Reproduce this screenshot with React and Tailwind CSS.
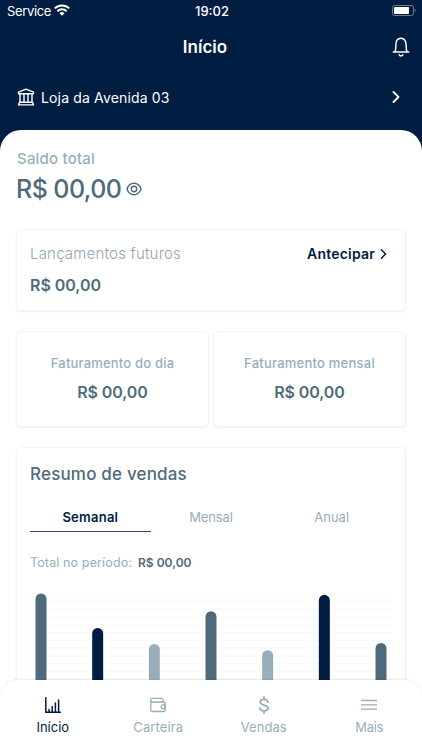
const BARS = [
  { top: 593.5, color: "#4f6b7b" },
  { top: 628, color: "#011d41" },
  { top: 644, color: "#98aebb" },
  { top: 611.2, color: "#4f6b7b" },
  { top: 650.2, color: "#98aebb" },
  { top: 594.8, color: "#011d41" },
  { top: 643, color: "#4f6b7b" },
];

const CARD = "rounded-[5px] border border-[#f3f4f4] bg-white shadow-[0_1px_2px_rgba(0,0,0,0.07)]";

function StatusBar() {
  return (
    <div className="grid h-[22px] grid-cols-3 items-center text-white">
      <div className="flex items-center gap-[3px] pl-[7px]">
        <span className="text-[13px] leading-none tracking-[-0.35px]">Service</span>
        <svg className="-mt-[2px] h-3 w-4" viewBox="0 0 16 12" fill="none" stroke="currentColor" strokeWidth="2">
          <path d="M.8 4.4a10.4 10.4 0 0 1 14.4 0M3.4 7.2a6.6 6.6 0 0 1 9.2 0" />
          <path d="M8 11.8 5.5 9.3a3.6 3.6 0 0 1 5 0Z" fill="currentColor" stroke="none" />
        </svg>
      </div>
      <span className="pl-[2px] text-center text-[13px] font-medium leading-none">19:02</span>
      <svg className="-mt-px mr-[6px] h-[11px] w-6 justify-self-end" viewBox="0 0 24 11" fill="none">
        <rect x=".5" y=".5" width="21" height="10" rx="2" stroke="#6c7b90" />
        <rect x="2" y="2" width="15" height="7" rx=".8" fill="#fff" />
        <path d="M22.7 3.6c1.2.4 1.2 3.4 0 3.8Z" fill="#6c7b90" />
      </svg>
    </div>
  );
}

function Chevron({ className }) {
  return (
    <svg className={className} viewBox="0 0 8 12" fill="none" stroke="currentColor" strokeWidth="1.8" strokeLinecap="round" strokeLinejoin="round">
      <path d="m1.5 1 5 5-5 5" />
    </svg>
  );
}

function Header() {
  return (
    <header className="h-[130px] shrink-0 text-white">
      <StatusBar />
      <div className="grid h-[50px] grid-cols-[1fr_auto_1fr] items-center px-3">
        <span />
        <h1 className="pr-3 pt-px text-[17px] font-semibold">Início</h1>
        <svg className="h-5 w-[18px] justify-self-end" viewBox="0 0 18 20" fill="none" stroke="currentColor" strokeWidth="1.5" strokeLinecap="round" strokeLinejoin="round">
          <path d="M1.2 15h15.6M3 14.8c.7-1.2.8-2.7.8-5.8C3.800 3.800 5.200 1.200 9 1.200s5.200 2.600 5.200 7.800c0 3.100.1 4.600.8 5.800M7.200 17.800c.5 1.500 3.100 1.500 3.600 0" />
        </svg>
      </div>
      <div className="flex h-[50px] items-center pl-[17px] pr-[22px]">
        <svg className="h-[18px] w-[18px]" viewBox="0 0 18 18" fill="none" stroke="currentColor" strokeWidth="1.4" strokeLinejoin="round">
          <path d="M1.500 4.200 9 1.100l7.500 3.100v1.600h-15ZM3 5.800v8.400M7 5.800v8.400M11 5.800v8.400M15 5.800v8.400M2.500 14.200h13l1 2.700h-15Z" />
        </svg>
        <span className="ml-[6px] text-[14px] tracking-[0.15px]">Loja da Avenida 03</span>
        <Chevron className="ml-auto h-3 w-2" />
      </div>
    </header>
  );
}

function RevenueCard({ title, tracking }) {
  return (
    <section className={`${CARD} flex h-24 flex-col items-center pt-[22px]`}>
      <p className={`text-[13px] font-medium leading-[18px] text-[#98aebb] ${tracking}`}>{title}</p>
      <p className="mt-2 text-[16px] font-semibold leading-6 tracking-[-0.1px] text-[#4f6b7b]">R$ 00,00</p>
    </section>
  );
}

function SalesChart() {
  return (
    <svg className="block h-[88px] w-[362px]" viewBox="30 593 362 88">
      {Array.from({ length: 12 }, (_, i) => (
        <path key={i} d={`M30 ${593.5 + i * 7.8}h362`} stroke="#f7f8f8" strokeWidth="1" />
      ))}
      {BARS.map((bar, i) => (
        <rect key={i} x={35.5 + i * 56.67} y={bar.top} width="11" height="110" rx="5.5" fill={bar.color} />
      ))}
    </svg>
  );
}

function SalesSummary() {
  return (
    <section className="mt-5 h-[241px] rounded-t-[5px] border border-b-0 border-[#f3f4f4] px-[13px] shadow-[0_1px_2px_rgba(0,0,0,0.07)]">
      <h2 className="pt-[13px] text-[17px] font-medium leading-[26px] tracking-[0.18px] text-[#4f6b7b]">Resumo de vendas</h2>
      <div className="mt-[14px] grid grid-cols-3 text-center text-[13px] leading-[32px] text-[#98aebb]">
        <span className="h-[31px] border-b border-[#324969] font-semibold tracking-[0.25px] text-[#011d41]">Semanal</span>
        <span className="tracking-[-0.1px]">Mensal</span>
        <span>Anual</span>
      </div>
      <p className="mt-[21px] flex gap-[6px] text-[12.5px] leading-[18px]">
        <span className="tracking-[0.13px] text-[#98aebb]">Total no período:</span>
        <span className="text-[12px] font-semibold text-[#4f6b7b]">R$ 00,00</span>
      </p>
      <div className="mt-[21px]">
        <SalesChart />
      </div>
    </section>
  );
}

function ChartIcon() {
  return (
    <svg className="h-4 w-4" viewBox="0 0 16 16" fill="none" stroke="currentColor" strokeWidth="1.5" strokeLinecap="round">
      <path d="M.8.8v14.400h14.600M4 14.500v-2M7.200 14.500V9.500M10.400 14.500V6M13.600 14.500V3" />
    </svg>
  );
}

function WalletIcon() {
  return (
    <svg className="h-4 w-4" viewBox="0 0 16 16" fill="none" stroke="currentColor" strokeWidth="1.3" strokeLinejoin="round">
      <path d="M13 5V2.400a1 1 0 0 0-1-1H2.200a1.400 1.400 0 0 0 0 3.600H14a1 1 0 0 1 1 1v7.200a1.300 1.300 0 0 1-1.300 1.300H2.300A1.500 1.500 0 0 1 .8 13V3" />
      <path d="M15.200 7.800h-2.100a1.900 1.900 0 0 0 0 3.800h2.100Z" />
    </svg>
  );
}

function DollarIcon() {
  return (
    <svg className="h-[18px] w-4" viewBox="0 0 16 18" fill="none" stroke="currentColor" strokeWidth="1.8" strokeLinecap="round">
      <path d="M8 1v2M8 15v2M12 6.200C11.600 4.200 10.200 3.300 8 3.300c-2.300 0-3.900 1-3.900 2.800 0 4 8 1.800 8 5.900 0 1.800-1.700 2.800-4.100 2.800s-3.900-1-4.100-3" />
    </svg>
  );
}

function MenuIcon() {
  return (
    <svg className="h-4 w-4" viewBox="0 0 16 16" stroke="currentColor" strokeWidth="1.300">
      <path d="M0 3.500h16M0 7.900h16M0 12.200h16" />
    </svg>
  );
}

function NavItem({ icon, label, className }) {
  return (
    <div className={`flex flex-col items-center pt-[16px] ${className}`}>
      <span className="flex h-[18px] items-center">{icon}</span>
      <span className="mt-[3px] text-[13px] leading-5">{label}</span>
    </div>
  );
}

export default function App() {
  return (
    <div className="flex h-[750px] w-[422px] flex-col overflow-hidden bg-[#011d41] font-['Inter',sans-serif]">
      <Header />
      <main className="h-[558px] shrink-0 overflow-hidden rounded-t-[21px] bg-white px-4 pt-5">
        <p className="pl-px text-[15px] font-medium leading-[18px] tracking-[0.2px] text-[#98aebb]">Saldo total</p>
        <div className="mt-[5px] flex h-8 items-center gap-[5px] text-[#4f6b7b]">
          <span className="text-[25px] font-medium leading-8 tracking-[-0.55px]">R$ 00,00</span>
          <svg className="h-[14px] w-4" viewBox="0 0 16 14" fill="none" stroke="currentColor" strokeWidth="1.400">
            <path d="M.9 7C2.200 3.400 4.700 1.300 8 1.300S13.800 3.400 15.100 7C13.800 10.600 11.300 12.700 8 12.700S2.200 10.600.9 7Z" />
            <circle cx="8" cy="7" r="2.700" />
          </svg>
        </div>
        <section className={`${CARD} mt-6 h-[82px] px-[13px] pt-[14px]`}>
          <div className="flex items-center justify-between">
            <span className="text-[15px] font-light leading-5 tracking-[0.2px] text-[#8fa5b2]">Lançamentos futuros</span>
            <span className="flex items-center gap-[5px] pr-[5px] text-[14px] font-semibold leading-5 tracking-[0.21px] text-[#011d41]">
              Antecipar
              <Chevron className="h-[10px] w-[7px]" />
            </span>
          </div>
          <p className="mt-[9px] text-[16px] font-semibold leading-6 tracking-[-0.05px] text-[#4f6b7b]">R$ 00,00</p>
        </section>
        <div className="mt-5 grid grid-cols-2 gap-1">
          <RevenueCard title="Faturamento do dia" tracking="tracking-[0.19px]" />
          <RevenueCard title="Faturamento mensal" tracking="tracking-[0.23px]" />
        </div>
        <SalesSummary />
      </main>
      <div className="flex-1 bg-white">
        <nav className="relative -mt-2 grid h-[70px] grid-cols-4 rounded-t-[18px] bg-white text-[#98aebb] shadow-[0_-1px_2px_rgba(0,0,0,0.08)]">
          <NavItem icon={<ChartIcon />} label="Início" className="text-[#011d41]" />
          <NavItem icon={<WalletIcon />} label="Carteira" className="tracking-[0.13px]" />
          <NavItem icon={<DollarIcon />} label="Vendas" className="tracking-[0.05px]" />
          <NavItem icon={<MenuIcon />} label="Mais" className="tracking-[-0.27px]" />
        </nav>
      </div>
    </div>
  );
}
